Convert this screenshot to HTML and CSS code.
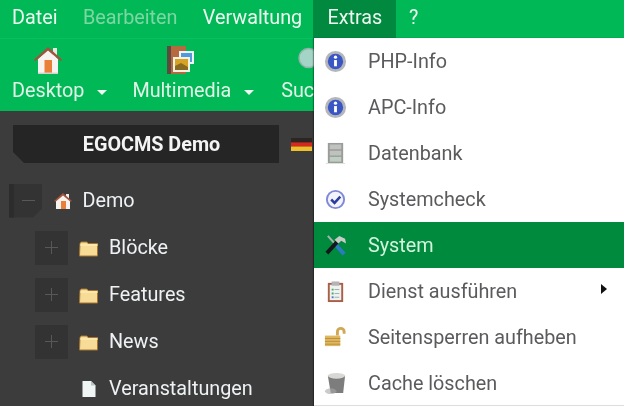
FILE: index.html
```html
<!DOCTYPE html>
<html lang="de">
<head>
<meta charset="utf-8">
<title>EGOCMS Demo</title>
<link rel="stylesheet" href="styles.css">
</head>
<body>
<div class="app">
  <nav class="menubar">
    <span class="menubar-item">Datei</span>
    <span class="menubar-item is-disabled">Bearbeiten</span>
    <span class="menubar-item">Verwaltung</span>
    <span class="menubar-item is-open">Extras</span>
    <span class="menubar-item">?</span>
  </nav>
  <div class="toolbar">
    <div class="tool">
      <svg class="tool-icon" viewBox="0 0 32 32"><path d="M21 4h4v9h-4z" fill="#f0e6e0"/><path d="M6 15 16 6l10 9v14H6z" fill="#f6f3f0"/><path d="M12.500 16h7.500v13h-7.500z" fill="#e8803a"/><path d="M1.500 16 16 3l14.500 13-2 1L16 6.500 3.500 17z" fill="#a2533c"/><path d="M6 28.500h20V30H6z" fill="#d8d2cc"/></svg>
      <span class="tool-label">Desktop</span><i class="caret"></i>
    </div>
    <div class="tool">
      <svg class="tool-icon" viewBox="2 0 32 32"><path d="M3 2h19v28H3z" fill="#b5693f"/><path d="M3 2h4v28H3z" fill="#5d4a3e"/><path d="M15 7h15v13H15z" fill="#eef4f8"/><path d="M17 9h11v9H17z" fill="#4f9bdc"/><path d="M9 13h17v15H9z" fill="#f3f0e4"/><path d="M11 15h13v11H11z" fill="#d6a324"/><path d="M11 22l6-3 7 4v3H11z" fill="#8a6a20"/></svg>
      <span class="tool-label">Multimedia</span><i class="caret"></i>
    </div>
    <div class="tool tool-search">
      <svg class="tool-icon" viewBox="0 0 32 32"><circle cx="10.500" cy="14" r="9.500" fill="#a3d4c6" stroke="#8fb5ab" stroke-width="1.500"/></svg>
      <span class="tool-label">Suchen</span>
    </div>
  </div>
  <main class="workspace">
    <div class="site-bar">
      <div class="site-title">EGOCMS Demo</div>
      <svg class="flag" viewBox="0 0 21 13"><path d="M0 0h21v4.500H0z" fill="#2b2622"/><path d="M0 4.500h21v4H0z" fill="#d8281e"/><path d="M0 8.500h21V13H0z" fill="#f0bf2c"/></svg>
    </div>
    <ul class="tree">
      <li class="tree-row is-root">
        <span class="toggle toggle-root"><i class="toggle-minus"></i></span>
        <svg class="tree-icon" viewBox="0 0 20 20"><path d="M13 3h3v6h-3z" fill="#f4eeea"/><path d="M3 9l7-6 7 6v9H3z" fill="#f6f3f0"/><path d="M8 10h5v8H8z" fill="#e8803a"/><path d="M1 10l9-8 9 8-1.500.8L10 4.500 2.500 10.800z" fill="#a2533c"/></svg>
        <span class="tree-label">Demo</span>
      </li>
      <li class="tree-row">
        <span class="toggle"><i class="toggle-plus"></i></span>
        <svg class="tree-icon" viewBox="0 0 20 20"><path d="M1 5.500 2 4h6l1 1.500h9.500V18h-18z" fill="#f7dc97" stroke="#a8742c"/><path d="M1 7h18" stroke="#fff0c0"/></svg>
        <span class="tree-label">Blöcke</span>
      </li>
      <li class="tree-row">
        <span class="toggle"><i class="toggle-plus"></i></span>
        <svg class="tree-icon" viewBox="0 0 20 20"><path d="M1 5.500 2 4h6l1 1.500h9.500V18h-18z" fill="#f7dc97" stroke="#a8742c"/><path d="M1 7h18" stroke="#fff0c0"/></svg>
        <span class="tree-label">Features</span>
      </li>
      <li class="tree-row">
        <span class="toggle"><i class="toggle-plus"></i></span>
        <svg class="tree-icon" viewBox="0 0 20 20"><path d="M1 5.500 2 4h6l1 1.500h9.500V18h-18z" fill="#f7dc97" stroke="#a8742c"/><path d="M1 7h18" stroke="#fff0c0"/></svg>
        <span class="tree-label">News</span>
      </li>
      <li class="tree-row">
        <span class="toggle toggle-empty"></span>
        <svg class="tree-icon" viewBox="0 0 20 20"><path d="M3.500 2H12l4.500 4.500V18h-13z" fill="#eef5f4"/><path d="M12 2v4.500h4.500z" fill="#b8c4c4"/></svg>
        <span class="tree-label">Veranstaltungen</span>
      </li>
    </ul>
  </main>
  <ul class="dropdown">
    <li class="dropdown-item">
      <svg class="item-icon" viewBox="0 0 24 24"><circle cx="12" cy="12" r="11" fill="#b4b6bb"/><circle cx="12" cy="12" r="8" fill="#3a55c4"/><circle cx="12" cy="7.500" r="1.700" fill="#fff"/><path d="M10.500 10.500h3V17h-3z" fill="#fff"/></svg>
      <span>PHP-Info</span>
    </li>
    <li class="dropdown-item">
      <svg class="item-icon" viewBox="0 0 24 24"><circle cx="12" cy="12" r="11" fill="#b4b6bb"/><circle cx="12" cy="12" r="8" fill="#3a55c4"/><circle cx="12" cy="7.500" r="1.700" fill="#fff"/><path d="M10.500 10.500h3V17h-3z" fill="#fff"/></svg>
      <span>APC-Info</span>
    </li>
    <li class="dropdown-item">
      <svg class="item-icon" viewBox="0 0 24 24"><path d="M4 1h16v21H4z" fill="#9a9c98"/><path d="M6 2.500h12v5H6zM6 9h12v5H6z" fill="#c0c2c0"/><path d="M6 15.500h12v5H6z" fill="#bccfc2"/><path d="M2 22h20v1H2z" fill="#dcdcdc"/></svg>
      <span>Datenbank</span>
    </li>
    <li class="dropdown-item">
      <svg class="item-icon" viewBox="0 0 24 24"><circle cx="12" cy="12" r="9" fill="#f2f3fb" stroke="#8088d8" stroke-width="2"/><path d="M7.500 12l3.500 3.500 6-6.500" fill="none" stroke="#2b3d9c" stroke-width="2.600"/></svg>
      <span>Systemcheck</span>
    </li>
    <li class="dropdown-item is-active">
      <svg class="item-icon" viewBox="0 0 24 24"><path d="M4 2l9 10" stroke="#a8b4b0" stroke-width="2"/><path d="M12 11l9 10" stroke="#2a7ac4" stroke-width="4"/><path d="M3 20 14 8" stroke="#15181a" stroke-width="4"/><path d="M11 6l5-4 6 3 1 5-5-3-3 3z" fill="#c8ccc8"/></svg>
      <span>System</span>
    </li>
    <li class="dropdown-item">
      <svg class="item-icon" viewBox="0 0 24 24"><path d="M4 3h16v20H4z" fill="#a75f48"/><path d="M6 5h12v16H6z" fill="#eef3f0"/><path d="M8 1.500h8V6H8z" fill="#b4b4b4"/><path d="M8 9h2v2H8zM8 13h2v2H8z" fill="#4aa868"/><path d="M8 17h2v2H8z" fill="#5878c8"/><path d="M11 9.500h5v1h-5zM11 13.500h5v1h-5zM11 17.500h5v1h-5z" fill="#a0b0b4"/></svg>
      <span>Dienst ausführen</span>
      <i class="submenu-arrow"></i>
    </li>
    <li class="dropdown-item">
      <svg class="item-icon" viewBox="0 0 24 24"><path d="M14 10V6a3.500 3.500 0 0 1 7 0v2" fill="none" stroke="#d0a855" stroke-width="3"/><path d="M1 10h16v11H1z" fill="#e0b860"/><path d="M1 13h16M1 16h16M1 19h16" stroke="#b88e3e"/></svg>
      <span>Seitensperren aufheben</span>
    </li>
    <li class="dropdown-item">
      <svg class="item-icon" viewBox="0 0 24 24"><path d="M4 4h18l-2 18H7z" fill="#7c7d7c"/><ellipse cx="13" cy="4" rx="9" ry="3" fill="#d8d8d6"/><ellipse cx="7" cy="20" rx="6" ry="3" fill="#a8a8a8" opacity=".6"/></svg>
      <span>Cache löschen</span>
    </li>
  </ul>
</div>
</body>
</html>
```

FILE: styles.css
```css
* { box-sizing: border-box; }
html, body { margin: 0; height: 100%; overflow: hidden; }
body { font-family: Roboto, "Noto Sans", sans-serif; background: #3c3c3c; font-size: 19.800px; }
ul { list-style: none; margin: 0; padding: 0; }

.app { position: relative; width: 624px; height: 406px; overflow: hidden; display: flex; flex-direction: column; filter: blur(.35px); }

.menubar { height: 38px; flex: none; background: #00b956; display: flex; align-items: center; color: #eef8f1; }
.menubar-item { height: 38px; line-height: 36px; padding: 0 12.700px; }
.menubar-item:first-child { padding-left: 12px; }
.menubar-item.is-disabled { color: #7ed6a4; }
.menubar-item.is-open { background: #00893f; padding: 0 14px; margin-left: -1.500px; }

.toolbar { height: 73px; flex: none; background: #00b956; border-top: 1px solid #05c05e; display: flex; padding-left: 12px; gap: 25px; color: #e2f4e8; }
.tool { display: grid; grid-template-columns: auto auto; grid-template-rows: 36px auto; align-items: center; flex: none; }
.tool-search { margin-left: 2px; }
.tool-icon { width: 32px; height: 32px; margin-top: 6px; justify-self: center; grid-column: 1; grid-row: 1; }
.tool-label { grid-column: 1; grid-row: 2; white-space: nowrap; margin-top: -5px; }
.caret { grid-column: 2; grid-row: 2; width: 0; height: 0; border: 5px solid transparent; border-top: 5px solid #f0f8f2; border-bottom: 0; margin-left: 13px; margin-top: -2px; }

.workspace { flex: 1; min-height: 0; background: #3c3c3c; padding-top: 14px; }
.site-bar { display: flex; align-items: center; padding-left: 13px; }
.site-title { width: 266px; height: 38px; padding-left: 11px; background: #252525; color: #f4f4f4; font-weight: 700; line-height: 39px; text-align: center; clip-path: polygon(0 0, 100% 0, 100% 100%, 11px 100%, 0 27px); }
.flag { width: 21px; height: 13px; margin-left: 12px; }

.tree { margin-top: 14px; color: #eef2f4; }
.tree-row { height: 47px; display: flex; align-items: center; padding-left: 35px; }
.tree-row.is-root { padding-left: 9px; }
.is-root .tree-label { margin-left: 9.500px; }
.toggle { width: 33px; height: 34px; background: #333; display: flex; align-items: center; justify-content: center; flex: none; }
.toggle-root { border-left: 5px solid #2c2c2c; clip-path: polygon(0 0, 100% 0, 100% 25px, 24px 100%, 0 100%); }
.toggle-empty { background: transparent; }
.toggle-minus { width: 13px; height: 1px; background: #585858; }
.toggle-plus { width: 13px; height: 13px; background: linear-gradient(#585858, #585858) center / 13px 1px no-repeat, linear-gradient(#585858, #585858) center / 1px 13px no-repeat; }
.tree-icon { width: 20px; height: 20px; margin-left: 11px; flex: none; }
.tree-label { margin-left: 10px; }

.dropdown { position: absolute; left: 314px; top: 38px; right: 0; bottom: 0; background: #fff; box-shadow: -1px 0 1px rgba(0,0,0,.35), inset 0 -1px 0 #ddd; color: #5b5b5e; }
.dropdown-item { height: 46px; display: flex; align-items: center; position: relative; padding-left: 10px; }
.dropdown-item span { margin-left: 21px; margin-top: 1px; }
.item-icon { width: 23px; height: 23px; flex: none; }
.dropdown-item.is-active { background: #008a3e; color: #d4f2dd; }
.submenu-arrow { position: absolute; left: 287px; top: 16px; width: 0; height: 0; border: 5px solid transparent; border-left: 6px solid #111; border-right: 0; }
```
